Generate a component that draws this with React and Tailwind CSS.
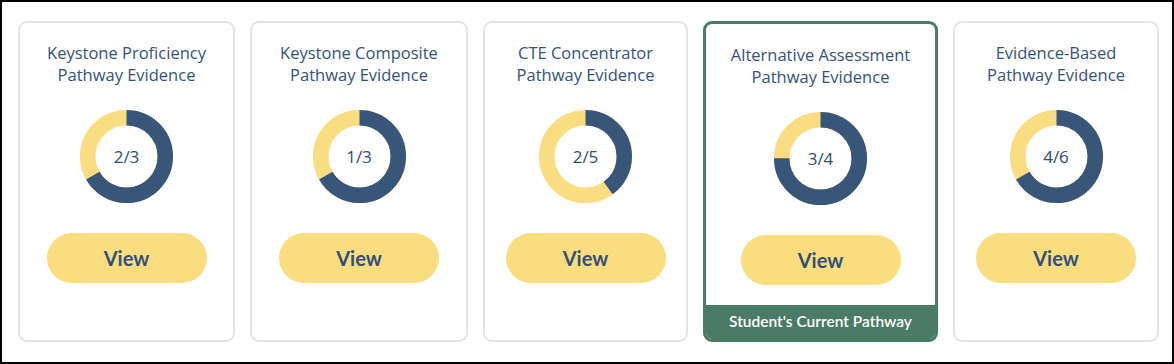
import React from "react";

// fill = share of the ring drawn in navy (card 2 shows the larger share, as in the source)
const pathways = [
  { title: ["Keystone Proficiency", "Pathway Evidence"], label: "2/3", fill: 2 / 3, width: "w-[217px]" },
  { title: ["Keystone Composite", "Pathway Evidence"], label: "1/3", fill: 2 / 3, width: "w-[218px]" },
  { title: ["CTE Concentrator", "Pathway Evidence"], label: "2/5", fill: 2 / 5, width: "w-[205px]" },
  { title: ["Alternative Assessment", "Pathway Evidence"], label: "3/4", fill: 3 / 4, width: "w-[235px]", current: true },
  { title: ["Evidence-Based", "Pathway Evidence"], label: "4/6", fill: 4 / 6, width: "w-[206px]" },
];

const Donut = ({ label, fill }) => {
  const r = 38.75;
  const c = 2 * Math.PI * r;
  const part = fill * c;
  return (
    <div className="relative w-[93px] h-[93px]">
      <svg width="93" height="93" viewBox="0 0 93 93" className="-rotate-90">
        <circle cx="46.5" cy="46.5" r={r} fill="none" stroke="#fadd80" strokeWidth="15.5" />
        <circle
          cx="46.5"
          cy="46.5"
          r={r}
          fill="none"
          stroke="#38557a"
          strokeWidth="15.5"
          strokeDasharray={`${part} ${c}`}
        />
      </svg>
      <span className="absolute inset-0 flex items-center justify-center font-['Open_Sans',sans-serif] text-[17px] text-[#2f4c74]">
        {label}
      </span>
    </div>
  );
};

const PathwayCard = ({ item }) => {
  return (
    <div
      className={`${item.width} h-[321px] flex flex-col items-center rounded-[9px] bg-white overflow-hidden ${
        item.current ? "border-[3px] border-[#4a7b66] pt-[20px]" : "border-2 border-[#e4e4e4] pt-[19px]"
      }`}
    >
      <h3 className="font-['Open_Sans',sans-serif] text-[16.5px] leading-[22px] text-center text-[#34527a] whitespace-nowrap">
        {item.title[0]}
        <br />
        {item.title[1]}
      </h3>
      <div className="mt-[24px]">
        <Donut label={item.label} fill={item.fill} />
      </div>
      <button className="mt-[30px] w-[160px] h-[50px] rounded-full bg-[#fadd7e] text-[20px] font-bold text-[#34507a]">
        View
      </button>
      {item.current && (
        <div className="mt-auto w-full h-[34px] bg-[#4a7b66] flex items-center justify-center text-white text-[15.5px] font-semibold">
          Student's Current Pathway
        </div>
      )}
    </div>
  );
};

export default function App() {
  return (
    <div className="w-[1174px] h-[364px] bg-white border-2 border-black pl-[16px] pt-[19px] font-['Lato',sans-serif]">
      <div className="flex gap-[15px]">
        {pathways.map((item, index) => (
          <PathwayCard key={index} item={item} />
        ))}
      </div>
    </div>
  );
}
